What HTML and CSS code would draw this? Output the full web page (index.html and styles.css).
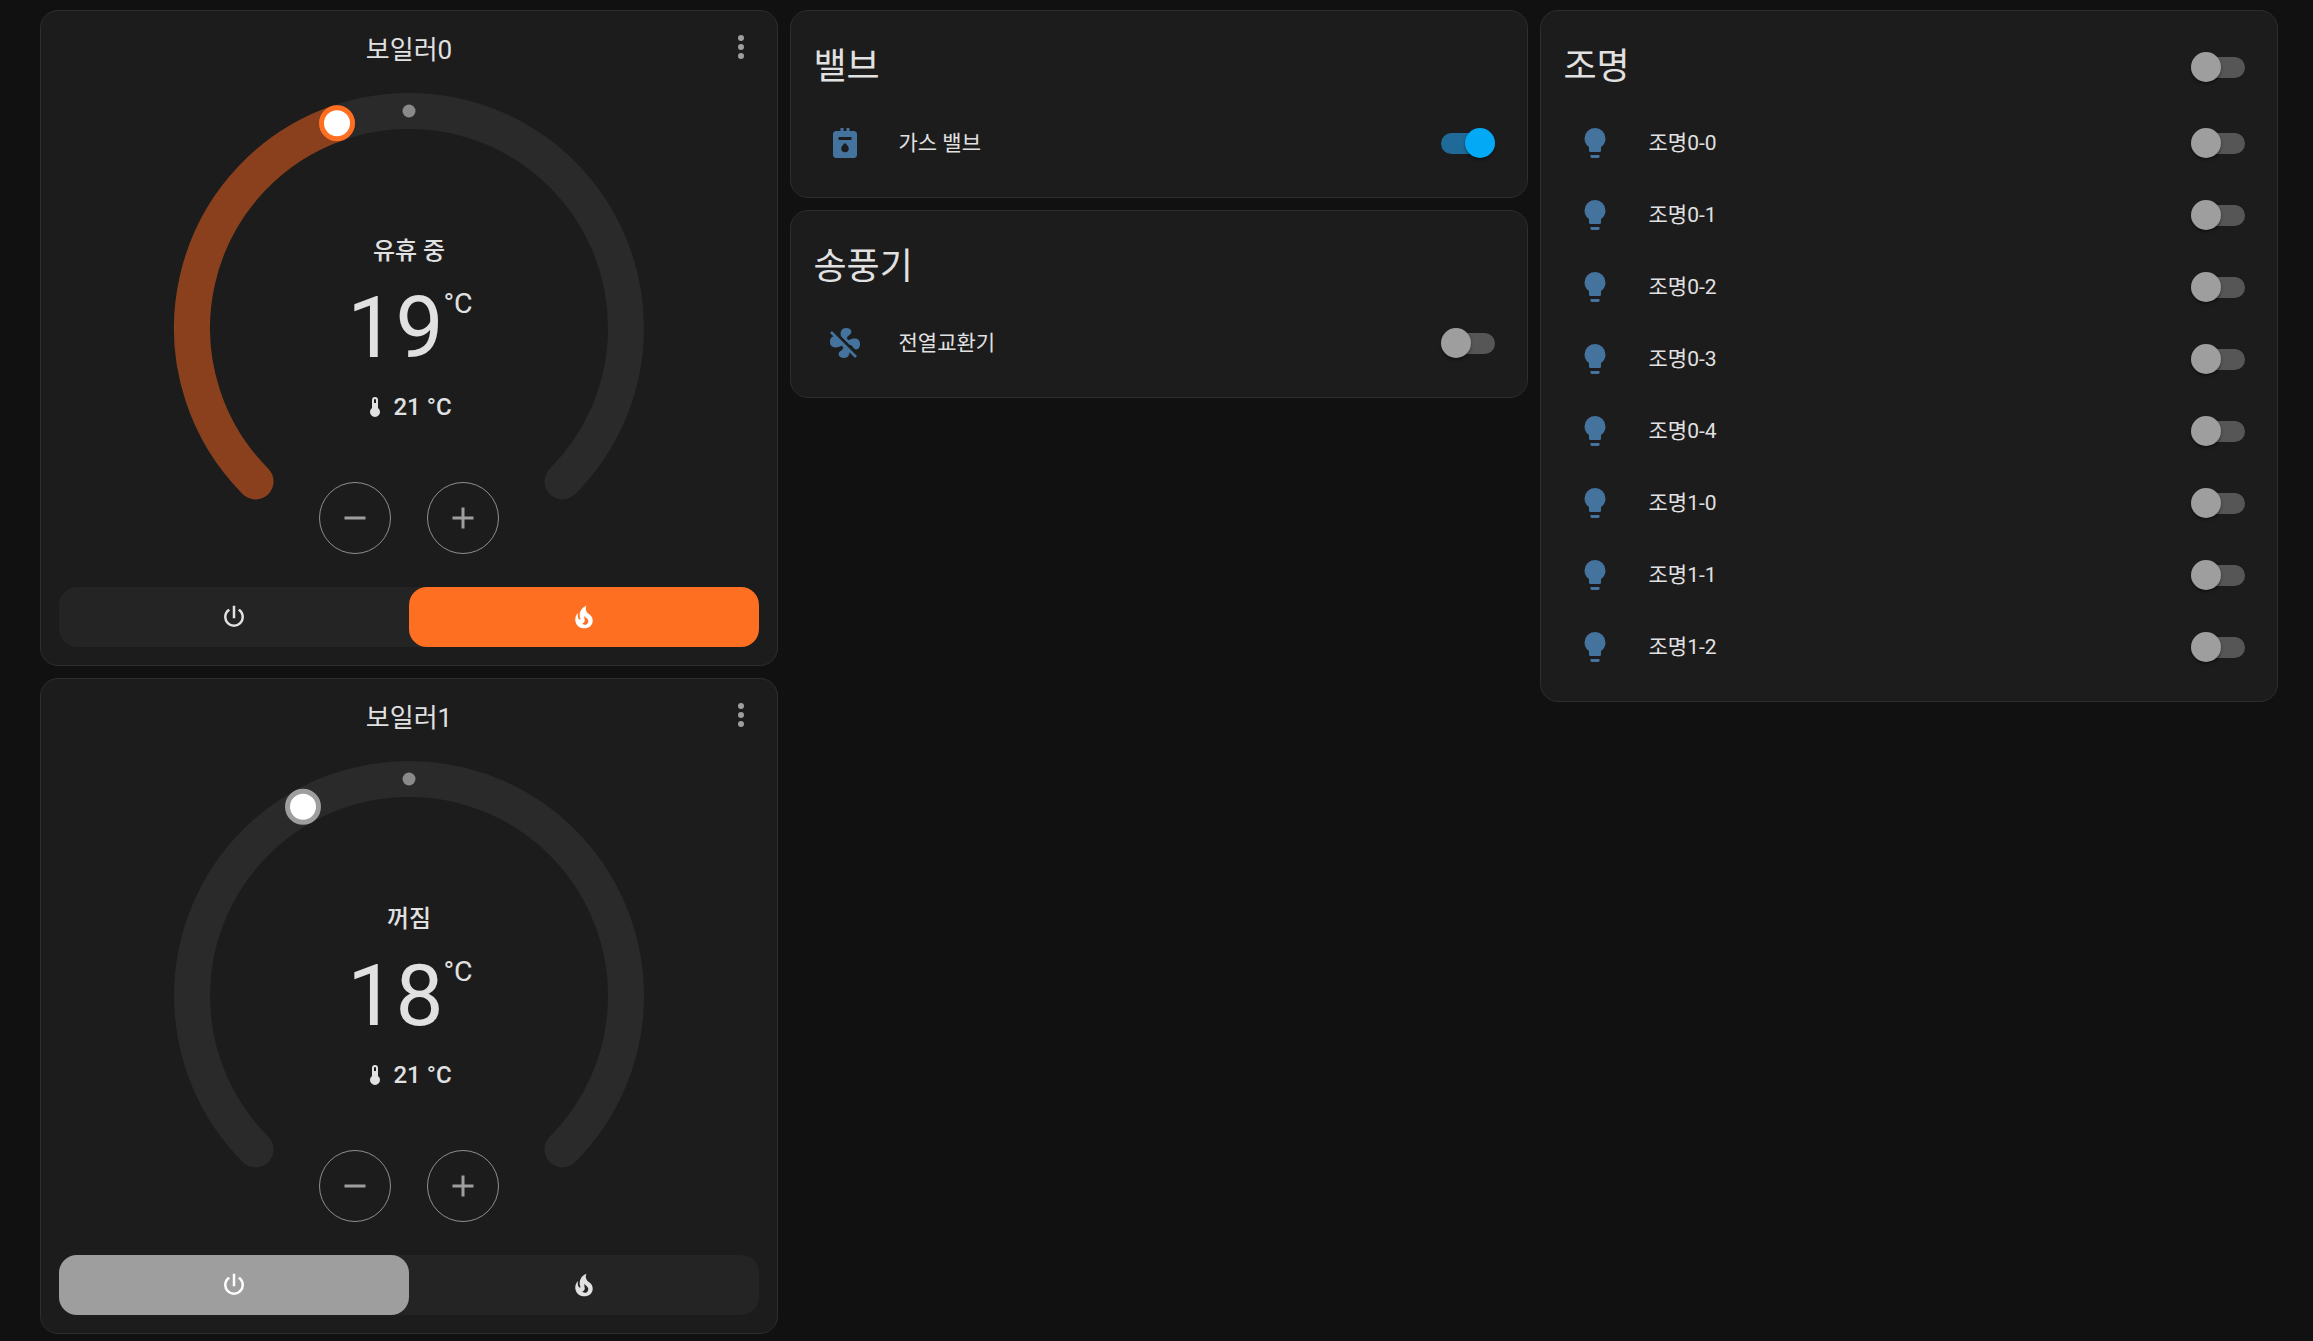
FILE: index.html
```html
<!DOCTYPE html>
<html lang="ko">
<head>
  <meta charset="UTF-8" />
  <meta name="viewport" content="width=device-width, initial-scale=1.0" />
  <title>Dashboard</title>
  <link rel="stylesheet" href="styles.css">
</head>
<body>
  <svg class="sprite" width="0" height="0">
    <symbol id="i-dots" viewBox="0 0 24 24"><path d="M12,16A2,2 0 0,1 14,18A2,2 0 0,1 12,20A2,2 0 0,1 10,18A2,2 0 0,1 12,16M12,10A2,2 0 0,1 14,12A2,2 0 0,1 12,14A2,2 0 0,1 10,12A2,2 0 0,1 12,10M12,4A2,2 0 0,1 14,6A2,2 0 0,1 12,8A2,2 0 0,1 10,6A2,2 0 0,1 12,4Z"/></symbol>
    <symbol id="i-minus" viewBox="0 0 24 24"><path d="M19,13H5V11H19V13Z"/></symbol>
    <symbol id="i-plus" viewBox="0 0 24 24"><path d="M19,13H13V19H11V13H5V11H11V5H13V11H19V13Z"/></symbol>
    <symbol id="i-power" viewBox="0 0 24 24"><path d="M16.56,5.44L15.11,6.89C16.84,7.94 18,9.83 18,12A6,6 0 0,1 12,18A6,6 0 0,1 6,12C6,9.83 7.16,7.94 8.88,6.88L7.44,5.44C5.36,6.88 4,9.28 4,12A8,8 0 0,0 12,20A8,8 0 0,0 20,12C20,9.28 18.64,6.88 16.56,5.44M13,3H11V13H13"/></symbol>
    <symbol id="i-fire" viewBox="0 0 24 24"><path d="M17.66 11.2C17.43 10.9 17.15 10.64 16.89 10.38C16.22 9.78 15.46 9.35 14.82 8.72C13.33 7.26 13 4.85 13.95 3C13 3.23 12.17 3.75 11.46 4.32C8.87 6.4 7.85 10.07 9.07 13.22C9.11 13.32 9.15 13.42 9.15 13.55C9.15 13.77 9 13.97 8.8 14.05C8.57 14.15 8.33 14.09 8.14 13.93C8.08 13.88 8.04 13.83 8 13.76C6.87 12.33 6.69 10.28 7.45 8.64C5.78 10 4.87 12.3 5 14.47C5.06 14.97 5.12 15.47 5.29 15.97C5.43 16.57 5.7 17.17 6 17.7C7.08 19.43 8.95 20.67 10.96 20.92C13.1 21.19 15.39 20.8 17.03 19.32C18.86 17.66 19.5 15 18.56 12.72L18.43 12.46C18.22 12 17.66 11.2 17.66 11.2M14.5 17.5C14.22 17.74 13.76 18 13.4 18.1C12.28 18.5 11.16 17.94 10.5 17.28C11.69 17 12.4 16.12 12.61 15.23C12.78 14.43 12.46 13.77 12.33 13C12.21 12.26 12.23 11.63 12.5 10.94C12.69 11.32 12.89 11.7 13.13 12C13.9 13 15.11 13.44 15.37 14.8C15.41 14.94 15.43 15.08 15.43 15.23C15.46 16.05 15.1 16.95 14.5 17.5H14.5Z"/></symbol>
    <symbol id="i-thermo" viewBox="0 0 24 24"><path d="M15 13V5A3 3 0 0 0 9 5V13A5 5 0 1 0 15 13M12 4A1 1 0 0 1 13 5V8H11V5A1 1 0 0 1 12 4Z"/></symbol>
    <symbol id="i-bulb" viewBox="0 0 24 24"><path d="M12,2A7,7 0 0,0 5,9C5,11.38 6.19,13.47 8,14.74V17A1,1 0 0,0 9,18H15A1,1 0 0,0 16,17V14.74C17.81,13.47 19,11.38 19,9A7,7 0 0,0 12,2M9,21A1,1 0 0,0 10,22H14A1,1 0 0,0 15,21V20H9V21Z"/></symbol>
    <symbol id="i-fan-off" viewBox="0 0 24 24"><path d="M12.5,2C9.64,2 8.57,4.55 9.29,7.47L15,13.16C15.87,13.37 16.81,13.81 17.28,14.73C18.46,17.1 22.03,17 22.03,12.5C22.03,8.92 18.05,8.13 14.35,10.13C14.03,9.73 13.61,9.42 13.13,9.22C13.32,8.29 13.76,7.24 14.75,6.75C17.11,5.57 17,2 12.5,2M3.28,4L2,5.27L4.47,7.73C3.22,7.74 2,8.87 2,11.5C2,15.07 5.96,15.85 9.65,13.87C9.97,14.27 10.4,14.59 10.89,14.79C10.69,15.71 10.25,16.75 9.27,17.24C6.91,18.42 7,22 11.5,22C13.8,22 14.94,20.36 14.94,18.21L18.73,22L20,20.73L3.28,4Z"/></symbol>
    <symbol id="i-meter" viewBox="0 0 24 24"><path fill-rule="evenodd" d="M9 2V4H6C4.9 4 4 4.9 4 6V20C4 21.1 4.9 22 6 22H18C19.1 22 20 21.1 20 20V6C20 4.9 19.1 4 18 4H15V2H13V4H11V2H9ZM7.7 8H16.3V10H7.7V8ZM12 12C12 12 9.5 14 9.5 15.7A2.5 2.5 0 0 0 14.5 15.7C14.5 14 12 12 12 12Z"/></symbol>
  </svg>

  <main class="dashboard">
    <section class="column">
      <div class="card climate">
        <div class="climate-head">
          <span></span>
          <div class="climate-title">보일러0</div>
          <svg class="icon icon-dots"><use href="#i-dots"/></svg>
        </div>
        <div class="dial">
          <svg class="dial-svg" width="480" height="480" viewBox="0 0 480 480">
            <path class="ring" d="M86.56 393.44A217 217 0 1 1 393.44 393.44"/>
            <path class="ring-heat" d="M86.56 393.44A217 217 0 0 1 168 35.3"/>
            <circle class="target-dot" cx="240" cy="23" r="6.5"/>
            <circle class="handle handle-heat" cx="168" cy="35.3" r="15.5"/>
          </svg>
          <div class="dial-info">
            <div class="dial-state">유휴 중</div>
            <div class="dial-temp"><span class="temp-value">19</span><span class="temp-unit">°C</span></div>
            <div class="dial-current"><svg class="icon icon-thermo"><use href="#i-thermo"/></svg>21 °C</div>
          </div>
          <div class="dial-buttons">
            <div class="round-btn"><svg class="icon"><use href="#i-minus"/></svg></div>
            <div class="round-btn"><svg class="icon"><use href="#i-plus"/></svg></div>
          </div>
        </div>
        <div class="modes">
          <div class="mode"><svg class="icon icon-mode"><use href="#i-power"/></svg></div>
          <div class="mode mode-heat"><svg class="icon icon-mode"><use href="#i-fire"/></svg></div>
        </div>
      </div>

      <div class="card climate">
        <div class="climate-head">
          <span></span>
          <div class="climate-title">보일러1</div>
          <svg class="icon icon-dots"><use href="#i-dots"/></svg>
        </div>
        <div class="dial">
          <svg class="dial-svg" width="480" height="480" viewBox="0 0 480 480">
            <path class="ring" d="M86.56 393.44A217 217 0 1 1 393.44 393.44"/>
            <circle class="target-dot" cx="240" cy="23" r="6.5"/>
            <circle class="handle handle-off" cx="134" cy="50.7" r="15.5"/>
          </svg>
          <div class="dial-info">
            <div class="dial-state">꺼짐</div>
            <div class="dial-temp"><span class="temp-value">18</span><span class="temp-unit">°C</span></div>
            <div class="dial-current"><svg class="icon icon-thermo"><use href="#i-thermo"/></svg>21 °C</div>
          </div>
          <div class="dial-buttons">
            <div class="round-btn"><svg class="icon"><use href="#i-minus"/></svg></div>
            <div class="round-btn"><svg class="icon"><use href="#i-plus"/></svg></div>
          </div>
        </div>
        <div class="modes">
          <div class="mode mode-off"><svg class="icon icon-mode"><use href="#i-power"/></svg></div>
          <div class="mode"><svg class="icon icon-mode"><use href="#i-fire"/></svg></div>
        </div>
      </div>
    </section>

    <section class="column">
      <div class="card entities">
        <div class="card-head"><h2>밸브</h2></div>
        <div class="row">
          <svg class="icon row-icon"><use href="#i-meter"/></svg>
          <span class="row-name">가스 밸브</span>
          <div class="switch on"><div class="thumb"></div></div>
        </div>
      </div>
      <div class="card entities">
        <div class="card-head"><h2>송풍기</h2></div>
        <div class="row">
          <svg class="icon row-icon"><use href="#i-fan-off"/></svg>
          <span class="row-name">전열교환기</span>
          <div class="switch"><div class="thumb"></div></div>
        </div>
      </div>
    </section>

    <section class="column">
      <div class="card entities">
        <div class="card-head"><h2>조명</h2><div class="switch"><div class="thumb"></div></div></div>
        <div class="row"><svg class="icon row-icon"><use href="#i-bulb"/></svg><span class="row-name">조명0-0</span><div class="switch"><div class="thumb"></div></div></div>
        <div class="row"><svg class="icon row-icon"><use href="#i-bulb"/></svg><span class="row-name">조명0-1</span><div class="switch"><div class="thumb"></div></div></div>
        <div class="row"><svg class="icon row-icon"><use href="#i-bulb"/></svg><span class="row-name">조명0-2</span><div class="switch"><div class="thumb"></div></div></div>
        <div class="row"><svg class="icon row-icon"><use href="#i-bulb"/></svg><span class="row-name">조명0-3</span><div class="switch"><div class="thumb"></div></div></div>
        <div class="row"><svg class="icon row-icon"><use href="#i-bulb"/></svg><span class="row-name">조명0-4</span><div class="switch"><div class="thumb"></div></div></div>
        <div class="row"><svg class="icon row-icon"><use href="#i-bulb"/></svg><span class="row-name">조명1-0</span><div class="switch"><div class="thumb"></div></div></div>
        <div class="row"><svg class="icon row-icon"><use href="#i-bulb"/></svg><span class="row-name">조명1-1</span><div class="switch"><div class="thumb"></div></div></div>
        <div class="row"><svg class="icon row-icon"><use href="#i-bulb"/></svg><span class="row-name">조명1-2</span><div class="switch"><div class="thumb"></div></div></div>
      </div>
    </section>
  </main>
</body>
</html>
```

FILE: styles.css
```css
html, body {
  height: 100%;
}

body {
  margin: 0;
  font-family: Roboto, 'Noto Sans CJK KR', sans-serif;
  background-color: #111111;
  color: #e1e1e1;
  overflow: hidden;
}

.sprite {
  display: block;
}

.dashboard {
  display: grid;
  grid-template-columns: repeat(3, 738px);
  gap: 12px;
  align-items: start;
  padding: 10px 0 0 40px;
}

.column {
  display: flex;
  flex-direction: column;
  gap: 12px;
}

.card {
  background: #1c1c1c;
  border: 1px solid #2e2e2e;
  border-radius: 18px;
}

.icon {
  display: block;
  width: 36px;
  height: 36px;
  flex: none;
  fill: currentColor;
}

/* climate cards */
.climate {
  height: 656px;
  box-sizing: border-box;
  padding: 0 18px 18px;
}

.climate-head {
  display: grid;
  grid-template-columns: 36px 1fr 36px;
  height: 77px;
}

.climate-title {
  font-size: 26px;
  line-height: 78px;
  text-align: center;
}

.icon-dots {
  margin-top: 18px;
  color: #9e9e9e;
}

.dial {
  position: relative;
  width: 480px;
  height: 480px;
  margin: 0 auto 19px;
}

.dial-svg {
  display: block;
}

.ring, .ring-heat {
  fill: none;
  stroke-width: 36;
  stroke-linecap: round;
}

.ring {
  stroke: #2a2a2a;
}

.ring-heat {
  stroke: #8a401c;
}

.target-dot {
  fill: #8a8a8a;
}

.handle {
  fill: #ffffff;
  stroke-width: 5;
}

.handle-heat {
  stroke: #ff6f22;
}

.handle-off {
  stroke: #9e9e9e;
}

.dial-info {
  position: absolute;
  top: 2px;
  left: 0;
  right: 0;
  bottom: 0;
  display: flex;
  flex-direction: column;
  align-items: center;
  justify-content: center;
  gap: 8px;
}

.dial-state, .dial-current {
  font-size: 24px;
  line-height: 36px;
  font-weight: 500;
}

.dial-temp {
  display: flex;
  height: 100px;
  margin-left: 2px;
}

.temp-value {
  font-size: 85.5px;
  line-height: 102px;
}

.temp-unit {
  font-size: 28.5px;
  line-height: 40px;
  margin-top: 7px;
}

.dial-current {
  display: flex;
  align-items: center;
  gap: 6px;
  margin-left: -3px;
  padding-top: 4px;
}

.icon-thermo {
  width: 24px;
  height: 24px;
}

.dial-buttons {
  position: absolute;
  left: 0;
  right: 0;
  bottom: 14px;
  display: flex;
  justify-content: center;
  gap: 36px;
}

.round-btn {
  width: 72px;
  height: 72px;
  box-sizing: border-box;
  border: 1.5px solid #8f8f8f;
  border-radius: 50%;
  display: flex;
  align-items: center;
  justify-content: center;
  color: #9e9e9e;
}

.modes {
  display: flex;
  height: 60px;
  background: #242424;
  border-radius: 18px;
}

.mode {
  flex: 1;
  display: flex;
  align-items: center;
  justify-content: center;
  border-radius: 18px;
}

.mode-heat {
  background: #ff6f22;
  color: #ffffff;
}

.mode-off {
  background: #9e9e9e;
  color: #ffffff;
}

.icon-mode {
  width: 30px;
  height: 30px;
}

/* entity lists */
.entities {
  padding: 0 24px 18px;
}

.card-head {
  display: flex;
  align-items: center;
  justify-content: space-between;
  padding: 20px 8px 4px 0;
  height: 72px;
}

.card-head h2 {
  margin: 0 0 0 -1.5px;
  font-size: 36px;
  line-height: 72px;
  font-weight: 400;
}

.row {
  display: flex;
  align-items: center;
  height: 72px;
  padding-right: 8px;
}

.row-icon {
  margin-left: 12px;
  margin-right: 35.5px;
  color: #44739e;
}

.row-name {
  flex: 1;
  font-size: 21px;
  line-height: 28px;
  margin-top: -1px;
}

.switch {
  position: relative;
  width: 54px;
  height: 21px;
  border-radius: 11px;
  background: #565656;
}

.thumb {
  position: absolute;
  top: -4.5px;
  left: 0;
  width: 30px;
  height: 30px;
  border-radius: 50%;
  background: #9e9e9e;
  box-shadow: 0 2px 3px rgba(0, 0, 0, 0.4);
}

.switch.on {
  background: #206a99;
}

.switch.on .thumb {
  left: 24px;
  background: #03a9f4;
}
```
